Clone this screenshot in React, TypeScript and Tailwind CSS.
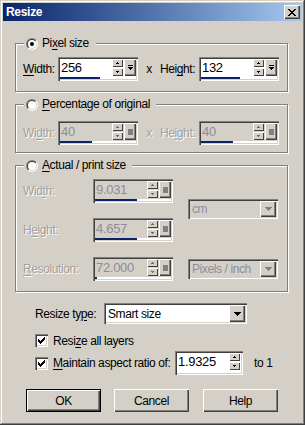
import React from "react";

const RAISED =
  "shadow-[inset_1px_1px_0_#ffffff,inset_-1px_-1px_0_#404040,inset_-2px_-2px_0_#808080]";
const SMALL_RAISED =
  "shadow-[inset_1px_1px_0_#ffffff,inset_-1px_-1px_0_#404040]";
const SUNKEN =
  "shadow-[inset_1px_1px_0_#808080,inset_2px_2px_0_#404040,inset_-1px_-1px_0_#ffffff,inset_-2px_-2px_0_#d4d0c8]";

function Pixels({ rows, color }: { rows: string[]; color: string }) {
  return (
    <svg
      width={rows[0].length}
      height={rows.length}
      shapeRendering="crispEdges"
      className="block"
    >
      {rows.flatMap((r, y) =>
        r.split("").map((c, x) =>
          c === "X" ? (
            <rect key={`${x}-${y}`} x={x} y={y} width={1} height={1} fill={color} />
          ) : null
        )
      )}
    </svg>
  );
}

const CLOSE = [
  "XX....XX",
  ".XX..XX.",
  "..XXXX..",
  "...XX...",
  "..XXXX..",
  ".XX..XX.",
  "XX....XX",
];
const CHECK = [
  "......X",
  ".....XX",
  "X...XXX",
  "XX.XXX.",
  "XXXXX..",
  ".XXX...",
  "..X....",
];
const UP = [".X.", "XXX"];
const DOWN = ["XXX", ".X."];
const DROP = ["XXXXXXX", ".XXXXX.", "..XXX..", "...X..."];
const POP = ["XXXXX", ".....", "XXXXX", ".XXX.", "..X.."];
const SQUARE = ["XXXXX", "XXXXX", "XXXXX", "XXXXX", "XXXXX", "XXXXX"];

function U({ children }: { children: React.ReactNode }) {
  return <span className="underline decoration-1 underline-offset-[2px]">{children}</span>;
}

function Radio({ checked }: { checked?: boolean }) {
  return (
    <svg width="12" height="12" viewBox="0 0 12 12" className="block shrink-0">
      <defs>
        <linearGradient id="rgOuter" x1="0" y1="0" x2="1" y2="1">
          <stop offset="0.5" stopColor="#808080" />
          <stop offset="0.5" stopColor="#ffffff" />
        </linearGradient>
        <linearGradient id="rgInner" x1="0" y1="0" x2="1" y2="1">
          <stop offset="0.5" stopColor="#404040" />
          <stop offset="0.5" stopColor="#d4d0c8" />
        </linearGradient>
      </defs>
      <circle cx="6" cy="6" r="6" fill="url(#rgOuter)" />
      <circle cx="6" cy="6" r="5" fill="url(#rgInner)" />
      <circle cx="6" cy="6" r="4" fill="#ffffff" />
      {checked && <circle cx="6" cy="6" r="2" fill="#000000" />}
    </svg>
  );
}

function Checkbox() {
  return (
    <div className={`w-[13px] h-[13px] bg-white ${SUNKEN} flex items-center justify-center shrink-0`}>
      <Pixels rows={CHECK} color="#000000" />
    </div>
  );
}

function SpinBtn({ up, disabled }: { up?: boolean; disabled?: boolean }) {
  return (
    <div className={`w-[11px] h-[8px] bg-[#d4d0c8] ${SMALL_RAISED} flex items-center justify-center`}>
      <Pixels rows={up ? UP : DOWN} color={disabled ? "#6b6b6b" : "#000000"} />
    </div>
  );
}

function Spinner({
  value,
  bar,
  disabled,
  popup = true,
  wide = true,
}: {
  value: string;
  bar: number;
  disabled?: boolean;
  popup?: boolean;
  wide?: boolean;
}) {
  return (
    <div className={`${wide ? "w-[80px]" : "w-[68px]"} h-[24px] p-[2px] ${SUNKEN} flex flex-col shrink-0`}>
      <div className={`flex h-[18px] items-start ${disabled ? "bg-[#d4d0c8]" : "bg-white"}`}>
        <div
          className={`flex-1 pl-[1px] text-[13px] leading-[17px] tracking-[-0.3px] ${
            disabled ? "text-[#8c8c9c]" : "text-black"
          }`}
        >
          {value}
        </div>
        <div className="flex flex-col gap-[1px] w-[11px] mr-[1px]">
          <SpinBtn up disabled={disabled} />
          <SpinBtn disabled={disabled} />
        </div>
        {popup && (
          <div className={`w-[12px] h-[17px] bg-[#d4d0c8] ${RAISED} flex items-center justify-center`}>
            {disabled ? <Pixels rows={SQUARE} color="#808080" /> : <Pixels rows={POP} color="#000000" />}
          </div>
        )}
      </div>
      <div className="h-[2px] bg-white flex">
        <div className="h-full bg-[#0a246a]" style={{ width: bar }} />
      </div>
    </div>
  );
}

function Dropdown({
  value,
  disabled,
  wide,
}: {
  value: string;
  disabled?: boolean;
  wide?: boolean;
}) {
  return (
    <div
      className={`${wide ? "w-[143px] h-[21px]" : "w-[90px] h-[20px]"} p-[2px] ${SUNKEN} flex ${
        disabled ? "bg-[#d4d0c8]" : "bg-white"
      }`}
    >
      <div
        className={`flex-1 pl-[2px] flex items-center ${disabled ? "text-[#8c8c9c]" : "text-black"}`}
      >
        {value}
      </div>
      <div className={`w-[16px] h-full bg-[#d4d0c8] ${RAISED} flex items-center justify-center`}>
        <Pixels rows={DROP} color={disabled ? "#808080" : "#000000"} />
      </div>
    </div>
  );
}

function Label({
  children,
  disabled,
  className = "",
}: {
  children: React.ReactNode;
  disabled?: boolean;
  className?: string;
}) {
  return (
    <div
      className={`${className} ${
        disabled ? "text-[#a0a0a0] [text-shadow:1px_1px_0_#ffffff]" : "text-black"
      } shrink-0`}
    >
      {children}
    </div>
  );
}

function Group({
  label,
  checked,
  className = "",
  legendPad,
  children,
}: {
  label: React.ReactNode;
  checked?: boolean;
  className?: string;
  legendPad: string;
  children: React.ReactNode;
}) {
  return (
    <div
      className={`relative w-[273px] border border-[#808080] shadow-[inset_1px_1px_0_#ffffff,1px_1px_0_#ffffff] ${className}`}
    >
      <div
        className={`absolute left-[8px] top-[-7px] h-[13px] flex items-center gap-[4px] bg-[#d4d0c8] pl-[2px] ${legendPad}`}
      >
        <Radio checked={checked} />
        <span className="leading-[13px]">{label}</span>
      </div>
      {children}
    </div>
  );
}

function Button({ children, primary }: { children: React.ReactNode; primary?: boolean }) {
  if (primary) {
    return (
      <div className="w-[75px] h-[23px] border border-black">
        <div className={`w-full h-full bg-[#d4d0c8] ${RAISED} flex items-center justify-center`}>
          {children}
        </div>
      </div>
    );
  }
  return (
    <div className={`w-[75px] h-[23px] bg-[#d4d0c8] ${RAISED} flex items-center justify-center`}>
      {children}
    </div>
  );
}

export default function App() {
  return (
    <div className="w-[305px] h-[425px] bg-[#d4d0c8] p-[3px] shadow-[inset_-1px_-1px_0_#404040,inset_1px_1px_0_#d4d0c8,inset_-2px_-2px_0_#808080,inset_2px_2px_0_#ffffff] font-['Liberation_Sans',Arial,sans-serif] text-[12px] tracking-[-0.4px] text-black overflow-hidden select-none">
      {/* Title bar */}
      <div className="h-[18px] flex items-center bg-linear-to-r from-[#0a246a] to-[#a6caf0] pl-[3px] pr-[2px]">
        <span className="flex-1 text-white font-bold tracking-[-0.3px]">Resize</span>
        <div className={`w-[16px] h-[14px] bg-[#d4d0c8] ${RAISED} flex items-center justify-center`}>
          <Pixels rows={CLOSE} color="#000000" />
        </div>
      </div>

      <div className="pl-[12px]">
        {/* Pixel size */}
        <Group
          checked
          legendPad="pr-[7px]"
          className="mt-[22px] pt-[13px] pb-[10px] pl-[7px]"
          label={
            <>
              Pi<U>x</U>el size
            </>
          }
        >
          <div className="flex items-center">
            <Label className="w-[35px]">
              <U>W</U>idth:
            </Label>
            <Spinner value="256" bar={40} />
            <div className="w-[22px] text-center">x</div>
            <Label className="w-[39px]">
              Hei<U>g</U>ht:
            </Label>
            <Spinner value="132" bar={39} />
          </div>
        </Group>

        {/* Percentage */}
        <Group
          legendPad="pr-[6px]"
          className="mt-[12px] pt-[16px] pb-[7px] pl-[7px]"
          label={
            <>
              <U>P</U>ercentage of original
            </>
          }
        >
          <div className="flex items-center">
            <Label disabled className="w-[35px]">
              Wi<U>d</U>th:
            </Label>
            <Spinner value="40" bar={32} disabled />
            <Label disabled className="w-[22px] text-center">
              x
            </Label>
            <Label disabled className="w-[39px]">
              He<U>i</U>ght:
            </Label>
            <Spinner value="40" bar={32} disabled />
          </div>
        </Group>

        {/* Actual / print size */}
        <Group
          legendPad="pr-[6px]"
          className="mt-[12px] pt-[13px] pb-[10px] pl-[7px]"
          label={
            <>
              <U>A</U>ctual / print size
            </>
          }
        >
          <div className="flex items-start">
            <div className="flex flex-col gap-[15px]">
              <div className="flex items-center">
                <Label disabled className="w-[70px]">
                  Wid<U>t</U>h:
                </Label>
                <Spinner value="9.031" bar={42} disabled />
              </div>
              <div className="flex items-center">
                <Label disabled className="w-[70px]">
                  H<U>e</U>ight:
                </Label>
                <Spinner value="4.657" bar={42} disabled />
              </div>
              <div className="flex items-center">
                <Label disabled className="w-[70px]">
                  <U>R</U>esolution:
                </Label>
                <Spinner value="72.000" bar={2} disabled />
              </div>
            </div>
            <div className="ml-[15px] mt-[20px] flex flex-col gap-[40px]">
              <Dropdown value="cm" disabled />
              <Dropdown value="Pixels / inch" disabled />
            </div>
          </div>
        </Group>

        {/* Resize type */}
        <div className="mt-[11px] pl-[20px] flex items-center h-[21px]">
          <div className="w-[69px]">
            Resize ty<U>p</U>e:
          </div>
          <Dropdown value="Smart size" wide />
        </div>

        <div className="mt-[10px] pl-[20px] flex items-center h-[13px]">
          <Checkbox />
          <span className="ml-[5px]">
            Resi<U>z</U>e all layers
          </span>
        </div>

        <div className="mt-[4px] pl-[20px] flex items-center h-[24px]">
          <Checkbox />
          <span className="ml-[5px] w-[122px]">
            <U>M</U>aintain aspect ratio of:
          </span>
          <Spinner value="1.9325" bar={0} popup={false} wide={false} />
          <span className="ml-[11px]">to 1</span>
        </div>

        <div className="mt-[14px] pl-[11px] flex items-center">
          <Button primary>OK</Button>
          <div className="ml-[13px]">
            <Button>Cancel</Button>
          </div>
          <div className="ml-[14px]">
            <Button>Help</Button>
          </div>
        </div>
      </div>
    </div>
  );
}
